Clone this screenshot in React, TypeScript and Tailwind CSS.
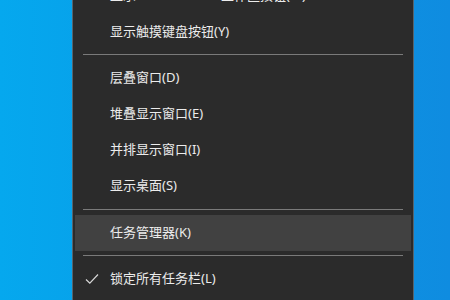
import React from "react";

type Entry =
  | { kind: "item"; label: string; hover?: boolean; check?: boolean }
  | { kind: "sep"; tall?: boolean };

const entries: Entry[] = [
  { kind: "item", label: "显示 Windows Ink 工作区按钮(W)" },
  { kind: "item", label: "显示触摸键盘按钮(Y)" },
  { kind: "sep" },
  { kind: "item", label: "层叠窗口(D)" },
  { kind: "item", label: "堆叠显示窗口(E)" },
  { kind: "item", label: "并排显示窗口(I)" },
  { kind: "item", label: "显示桌面(S)" },
  { kind: "sep", tall: true },
  { kind: "item", label: "任务管理器(K)", hover: true },
  { kind: "sep" },
  { kind: "item", label: "锁定所有任务栏(L)", check: true },
];

export default function App() {
  return (
    <div
      className="w-[450px] h-[300px] overflow-hidden flex bg-gradient-to-r from-[#05a8ee] via-[#0a99e6] to-[#0f8ce0]"
      style={{ fontFamily: '"Noto Sans", "Noto Sans CJK SC", sans-serif' }}
    >
      <div className="ml-[72px] w-[342px] h-full shrink-0 bg-[#2b2b2b] border-x border-[#56656e] overflow-hidden">
        <div className="-mt-[22px] px-[2px]">
          {entries.map((e, i) =>
            e.kind === "sep" ? (
              <div
                key={i}
                className={`${e.tall ? "h-[11px] pt-[5px]" : "h-[10px] pt-[4px]"} px-[8px]`}
              >
                <div className="h-px bg-[#7a7a7a]" />
              </div>
            ) : (
              <div
                key={i}
                className={`relative h-[36px] flex items-center pl-[35px] text-[13px] text-[#ececec] ${
                  e.hover ? "bg-[#414141]" : ""
                }`}
              >
                {e.check && (
                  <svg
                    className="absolute left-[10px] top-[11px]"
                    width="14"
                    height="14"
                    viewBox="0 0 14 14"
                    fill="none"
                  >
                    <path d="M1 7.5 L4.8 11.2 L13 2.5" stroke="#d8d8d8" strokeWidth="1.2" />
                  </svg>
                )}
                <span>{e.label}</span>
              </div>
            )
          )}
        </div>
      </div>
    </div>
  );
}
